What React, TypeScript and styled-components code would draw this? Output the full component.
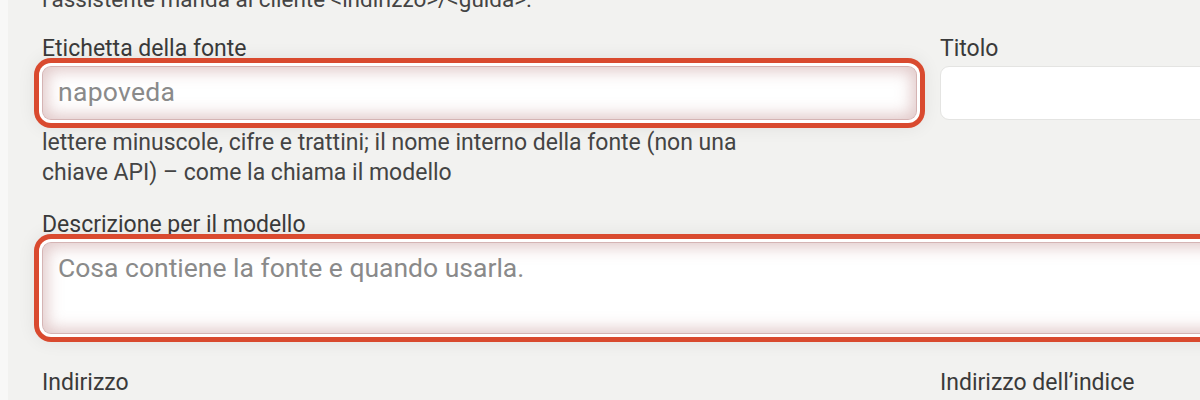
import React from 'react';
import styled, { createGlobalStyle, css } from 'styled-components';

const GlobalStyle = createGlobalStyle`
    html, body {
        margin: 0;
        padding: 0;
        background: #f8f8f7;
        overflow: hidden;
    }
    body {
        font-family: Roboto, "Liberation Sans", sans-serif;
    }
`;

const Panel = styled.div`
    margin-left: 8px;
    height: 400px;
    overflow: hidden;
    background: #f2f2f0;
    padding-left: 34px;
`;

const Intro = styled.p`
    margin: -16px 0 21px;
    font-size: 22.5px;
    line-height: 30px;
    color: #444444;
    white-space: nowrap;
`;

const Form = styled.div`
    display: grid;
    grid-template-columns: 875px 875px;
    column-gap: 23px;
    row-gap: 23px;
`;

const Field = styled.div<{ $wide?: boolean; $extra?: number }>`
    display: flex;
    flex-direction: column;
    grid-column: ${(p) => (p.$wide ? '1 / span 2' : 'auto')};
    margin-bottom: ${(p) => p.$extra ?? 0}px;
`;

const Label = styled.label`
    font-size: 23px;
    line-height: 28px;
    color: #3a3a3a;
    margin-bottom: 3px;
`;

const ring = css`
    border-color: rgba(190, 140, 140, 0.65);
    box-shadow:
        inset 0 0 16px 4px rgba(165, 90, 90, 0.34),
        0 0 0 3px #ffffff,
        0 0 0 8px #d94a2f,
        0 0 18px 8px rgba(0, 0, 0, 0.07);
`;

const fieldBase = css<{ $invalid?: boolean }>`
    box-sizing: border-box;
    width: 100%;
    background: #ffffff;
    border: 1px solid #e4e4e2;
    border-radius: 9px;
    padding: 0 15px;
    font-family: Roboto, "Liberation Sans", sans-serif;
    font-size: 26.5px;
    color: #333;
    outline: none;
    &::placeholder {
        color: #8a8a8a;
    }
    ${(p) => p.$invalid && ring}
`;

const Input = styled.input<{ $invalid?: boolean }>`
    ${fieldBase};
    height: 54px;
    padding-bottom: 3px;
    letter-spacing: 0.3px;
`;

const TextArea = styled.textarea<{ $invalid?: boolean }>`
    ${fieldBase};
    height: 92px;
    padding-top: 9px;
    line-height: 32px;
    resize: none;
`;

const Help = styled.p`
    margin: 8px 0 0;
    max-width: 740px;
    font-size: 23px;
    line-height: 30px;
    color: #444444;
`;

export default function App() {
    return (
        <>
            <GlobalStyle />
            <Panel>
                <Intro>l’assistente manda al cliente &lt;indirizzo&gt;/&lt;guida&gt;.</Intro>
                <Form>
                    <Field>
                        <Label>Etichetta della fonte</Label>
                        <Input $invalid placeholder="napoveda" />
                        <Help>
                            lettere minuscole, cifre e trattini; il nome interno della fonte (non una chiave API) – come
                            la chiama il modello
                        </Help>
                    </Field>
                    <Field>
                        <Label>Titolo</Label>
                        <Input />
                    </Field>
                    <Field $wide $extra={12}>
                        <Label>Descrizione per il modello</Label>
                        <TextArea $invalid placeholder="Cosa contiene la fonte e quando usarla." />
                    </Field>
                    <Field>
                        <Label>Indirizzo</Label>
                        <Input />
                    </Field>
                    <Field>
                        <Label>Indirizzo dell’indice</Label>
                        <Input />
                    </Field>
                </Form>
            </Panel>
        </>
    );
}
